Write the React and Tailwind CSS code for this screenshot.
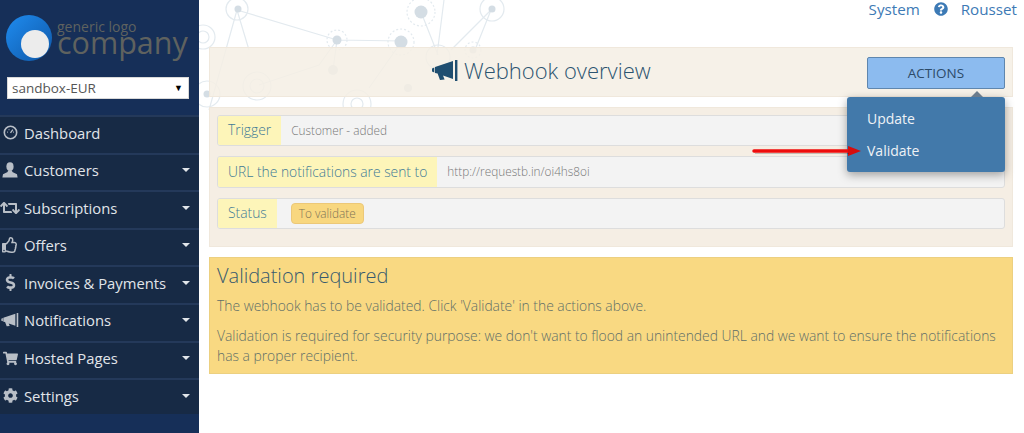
import React from "react";
import { FaRetweet, FaRegThumbsUp, FaDollarSign, FaShoppingCart, FaCog, FaQuestionCircle } from "react-icons/fa";

const Gauge = () => (
  <svg width="15" height="15" viewBox="0 0 16 16" fill="none" stroke="currentColor">
    <circle cx="8" cy="8" r="6.6" strokeWidth="1.7" />
    <path d="M8 8.5 10.5 5M4.5 7.5h.8M6 5h.8M10.7 7.5h.8" strokeWidth="1.4" />
  </svg>
);

const User = () => (
  <svg width="16" height="16" viewBox="0 0 16 16" fill="currentColor">
    <ellipse cx="8" cy="4.6" rx="3.6" ry="4.4" />
    <path d="M6 8.6 5.6 10 1 12.2 0.4 15.5H15.6L15 12.2 10.4 10 10 8.6Z" />
  </svg>
);

const Horn = ({ width, height }) => (
  <svg width={width} height={height} viewBox="0 0 26 21" fill="currentColor">
    <path d="M0 8.5 2.3 7.5V12.5L0 11.5Z" />
    <path d="M3 7 21 1V19L11 15.6 12.6 19.5 8 20 5.6 13.5 3 13Z" />
    <rect x="23" y="0" width="2.4" height="21" />
  </svg>
);

const nav = [
  ["Dashboard", <Gauge />, false],
  ["Customers", <User />, true],
  ["Subscriptions", <FaRetweet size={20} />, true],
  ["Offers", <FaRegThumbsUp size={16} />, true],
  ["Invoices & Payments", <FaDollarSign size={17} />, true],
  ["Notifications", <Horn width={18} height={14} />, true],
  ["Hosted Pages", <FaShoppingCart size={15} />, true],
  ["Settings", <FaCog size={15} />, true],
];

const Network = () => (
  <svg className="absolute left-0 top-0" width="825" height="120" viewBox="0 0 825 120" fill="none">
    <g stroke="#e3eaef" strokeWidth="1.2">
      <path d="M38 10 138 40 203 41M38 10 10 110M138 40 120 65 60 85M203 41 170 88M38 10 50 50M222 12 239 55M245 0 238 55M292 10 252 50M292 10 276 50M138 40 134 70" />
      <circle cx="38" cy="9" r="11" />
      <circle cx="4" cy="37" r="12" />
      <circle cx="4" cy="37" r="6" />
      <circle cx="8" cy="94" r="13" />
      <circle cx="58" cy="86" r="14" />
      <circle cx="58" cy="86" r="7" />
      <circle cx="138" cy="40" r="10" strokeDasharray="2 2" />
      <circle cx="202" cy="42" r="13" strokeDasharray="2 2" />
      <circle cx="222" cy="12" r="14" strokeDasharray="2 2" />
      <circle cx="293" cy="9" r="12" />
      <circle cx="239" cy="57" r="12" />
      <circle cx="274" cy="50" r="8" strokeDasharray="2 2" />
      <circle cx="158" cy="104" r="14" />
      <circle cx="158" cy="104" r="6" />
    </g>
    <g fill="#d4dde4">
      <circle cx="39" cy="9" r="3.5" />
      <circle cx="8" cy="94" r="3.5" />
      <circle cx="138" cy="40" r="4.5" />
      <circle cx="202" cy="42" r="6.5" />
      <circle cx="222" cy="12" r="6.5" />
      <circle cx="293" cy="9" r="3.5" />
      <circle cx="274" cy="50" r="3.5" />
      <circle cx="134" cy="70" r="5" />
      <circle cx="209" cy="88" r="4" />
    </g>
  </svg>
);

function Row({ label, height, children }) {
  return (
    <div className={`flex ${height} border border-[#dddddd] rounded-[3px] bg-[#f3f3f3] overflow-hidden`}>
      <div className="flex items-center px-[10px] bg-[#fdf5b9] text-[#3f7a96] text-[13.85px] font-light">{label}</div>
      <div className="flex items-center pl-[10px] text-[11.8px] font-light text-[#777777]">{children}</div>
    </div>
  );
}

export default function App() {
  return (
    <div className="relative flex h-[433px] w-[1024px] overflow-hidden bg-white font-['Open_Sans',sans-serif]">
      <aside className="w-[199px] shrink-0 bg-[#162f58] flex flex-col">
        <div className="flex h-[77px] items-start">
          <div className="relative ml-[6px] mt-[15px] h-[46px] w-[46px] shrink-0 rounded-full bg-gradient-to-br from-[#1f8cf0] to-[#0f58a8]">
            <div className="absolute left-[15px] top-[15px] h-[28px] w-[28px] rounded-full bg-[#ececec]" />
          </div>
          <div className="ml-[5px] mt-[21px] flex flex-col text-[#5f625f]">
            <span className="text-[14px] leading-[12px]">generic logo</span>
            <span className="text-[30.5px] leading-[26px] -mt-[4px]">company</span>
          </div>
        </div>
        <div className="ml-[7px] flex h-[22px] w-[182px] items-center justify-between border border-[#d9d9d9] bg-white pl-[4px] pr-[5px] text-[13.5px] text-[#555555]">
          <span>sandbox-EUR</span>
          <span className="text-[9px] text-black">▼</span>
        </div>
        <nav className="mt-[16px] flex flex-col">
          {nav.map(([label, icon, caret]) => (
            <div key={label} className="flex h-[37.6px] last:h-[36px] items-start border-t-2 border-[#24395a] bg-[#172a45] pt-[5.5px] text-[14.8px] leading-[20px] text-[#e1e5ea]">
              <span className="-ml-[2px] mr-[2px] flex h-[20px] w-[24px] shrink-0 items-center justify-center text-[#b9bfc7]">{icon}</span>
              <span className="flex-1">{label}</span>
              {caret && <span className="mr-[9px] mt-[8px] h-0 w-0 border-x-[4px] border-t-[4px] border-x-transparent border-t-[#e1e5ea]" />}
            </div>
          ))}
        </nav>
      </aside>

      <main className="relative flex-1">
        <Network />
        <div className="relative flex h-[47px] items-start justify-end pr-[7px] text-[15.2px] leading-[19px] text-[#3d7ab5]">
          <span>System</span>
          <FaQuestionCircle size={14} className="ml-[14px] mr-[13px] mt-[2px]" />
          <span>Rousset</span>
        </div>
        <div className="relative ml-[10px] mr-[11px] flex h-[50px] items-center border border-[#f0e8dc] bg-[#f5eee4]/85">
          <div className="absolute left-[222px] -mt-[3px] flex items-center text-[#2c5470]">
            <span className="text-[#1f4e70]"><Horn width={26} height={21} /></span>
            <span className="ml-[6px] text-[22px] font-light">Webhook overview</span>
          </div>
          <div className="absolute right-[7px] top-[9px] flex h-[32px] w-[138px] items-center justify-center rounded-[2px] border border-[#5f86ae] bg-[#8cbbef] text-[13.5px] text-[#2c4a68]">ACTIONS</div>
        </div>
        <div className="relative ml-[10px] mr-[11px] mt-[10px] flex h-[140px] flex-col gap-[10px] border border-[#f0e8dc] bg-[#f5eee4] px-[7px] pt-[7px]">
          <Row label="Trigger" height="h-[31px]">Customer - added</Row>
          <Row label="URL the notifications are sent to" height="h-[32px]">http://requestb.in/oi4hs8oi</Row>
          <Row label="Status" height="h-[31px]">
            <span className="ml-[4px] rounded-[4px] border border-[#ecc878] bg-[#f8d77f] px-[7px] py-[1px] text-[#7d7357]">To validate</span>
          </Row>
        </div>
        <div className="relative ml-[10px] mr-[11px] mt-[10px] h-[117px] border border-[#ecd080] bg-[#f9d982] px-[7px] pt-[5px] text-[13.85px] font-light leading-[20px] text-[#5f6f68]">
          <h2 className="text-[20px] font-light leading-[26px] text-[#37596e]">Validation required</h2>
          <p className="mt-[7px]">The webhook has to be validated. Click 'Validate' in the actions above.</p>
          <p className="mt-[10px]">Validation is required for security purpose: we don't want to flood an unintended URL and we want to ensure the notifications has a proper recipient.</p>
        </div>

        <div className="absolute left-[648px] top-[97px] h-[75px] w-[158px] rounded-[3px] bg-[#4279aa] pl-[20px] pt-[6px] text-[14px] leading-[31.5px] text-[#eef2f6] shadow-[0_3px_10px_rgba(0,0,0,0.35)]">
          <div className="absolute right-[22px] -top-[6px] h-0 w-0 border-x-[6px] border-b-[6px] border-x-transparent border-b-[#6b7c8c]" />
          <div>Update</div>
          <div>Validate</div>
        </div>
        <svg className="absolute left-[550px] top-[141px]" width="115" height="22" viewBox="0 0 115 22">
          <path d="M5 10 H100" stroke="#ee0c0c" strokeWidth="3.5" strokeLinecap="round" />
          <path d="M99 5 L112 10 L99 15 Z" fill="#d80c0c" />
          <path d="M6 12.5 H100" stroke="#000" strokeOpacity="0.2" strokeWidth="1" />
        </svg>
      </main>
    </div>
  );
}
